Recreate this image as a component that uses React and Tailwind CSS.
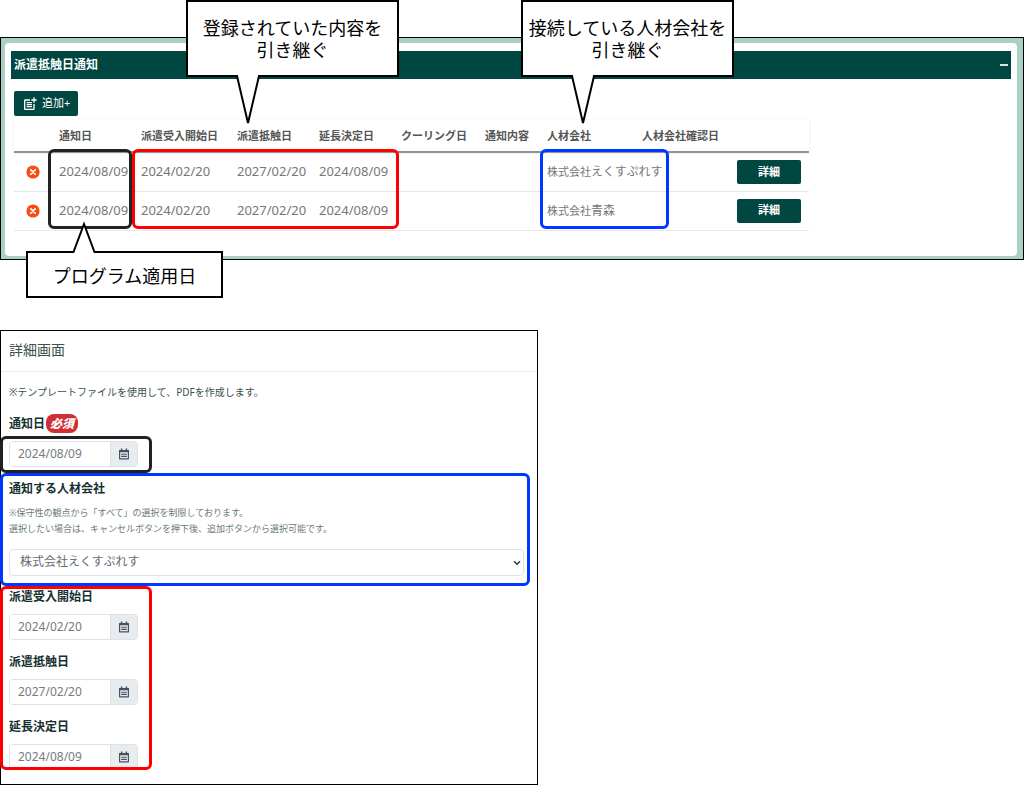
import { MdPostAdd } from "react-icons/md";

const columns = [
  { label: "", width: "w-[41px]" },
  { label: "通知日", width: "w-[82px]" },
  { label: "派遣受入開始日", width: "w-[96px]" },
  { label: "派遣抵触日", width: "w-[82px]" },
  { label: "延長決定日", width: "w-[82px]" },
  { label: "クーリング日", width: "w-[84px]" },
  { label: "通知内容", width: "w-[62px]" },
  { label: "人材会社", width: "w-[95px]" },
  { label: "人材会社確認日", width: "w-[99px]" },
  { label: "", width: "w-[72px]" },
];

const rows = [
  { id: 1, notice: "2024/08/09", start: "2024/02/20", limit: "2027/02/20", extension: "2024/08/09", company: "えくすぷれす" },
  { id: 2, notice: "2024/08/09", start: "2024/02/20", limit: "2027/02/20", extension: "2024/08/09", company: "青森" },
];

function DeleteIcon() {
  return (
    <svg viewBox="0 0 14 14" className="size-3.5" aria-hidden="true">
      <circle cx="7" cy="7" r="6.6" fill="#fb4a12" />
      <path d="M4.8 4.800l4.400 4.400M9.200 4.800L4.800 9.200" stroke="#fff" strokeWidth="1.8" strokeLinecap="round" />
    </svg>
  );
}

function CalendarIcon() {
  return (
    <svg viewBox="0 0 12 12" className="size-3" aria-hidden="true" fill="none" stroke="#475260">
      <path d="M1.6 2.5h8.8v8.3H1.6z" strokeWidth="1.2" strokeLinejoin="round" />
      <path d="M1.2 3.2h9.6" strokeWidth="2" />
      <path d="M3.6 .6v2M8.4 .6v2" strokeWidth="1.5" />
      <path d="M3.2 6.3h5.6M3.2 8.4h5.6" strokeWidth="1.1" />
    </svg>
  );
}

function Callout({ place, pointer, up, children }) {
  return (
    <div className={`absolute flex items-center justify-center border-2 border-black bg-white text-center text-lg leading-[22px] whitespace-nowrap text-black ${place}`}>
      <p>{children}</p>
      {up ? (
        <svg viewBox="0 0 26 32" className={`absolute h-8 w-[26px] ${pointer}`} aria-hidden="true">
          <path d="M2 32L13 3L24 32" fill="#fff" />
          <path d="M1 31h1.5L13 3L23.500 31H25" fill="none" stroke="#000" strokeWidth="2" />
        </svg>
      ) : (
        <svg viewBox="0 0 26 54" className={`absolute h-[54px] w-[26px] ${pointer}`} aria-hidden="true">
          <path d="M2 0L13 48L24 0" fill="#fff" />
          <path d="M1 1h1L13 48L24 1h1" fill="none" stroke="#000" strokeWidth="2" />
        </svg>
      )}
    </div>
  );
}

function Outline({ place }) {
  return <div className={`pointer-events-none absolute rounded-md border-3 ${place}`} />;
}

function DateField({ id, label, value, required }) {
  return (
    <div>
      <div className="flex h-5 items-center gap-px">
        <label htmlFor={id} className="text-xs font-bold text-[#16302f]">{label}</label>
        {required && (
          <span className="rounded-lg bg-[#d22f33] px-1 text-xs leading-[19px] font-black text-white italic">必須</span>
        )}
      </div>
      <div className="mt-[7px] flex h-[26px] w-[129px] overflow-hidden rounded-sm border border-[#dee2e6]">
        <input id={id} type="text" defaultValue={value} className="w-[100px] min-w-0 bg-white pl-2 text-xs text-[#757b80] outline-none" />
        <button type="button" aria-label={`${label}を選択`} className="flex flex-1 items-center justify-center border-l border-[#dee2e6] bg-[#e9ecef]">
          <CalendarIcon />
        </button>
      </div>
    </div>
  );
}

function NoticePanel() {
  return (
    <section className="relative mt-[37px] border border-black bg-[#a9d0c5] pt-[5px] pr-1.5 pb-[3px] pl-1">
      <div className="rounded-sm bg-white px-1.5 pt-2 pb-[25px]">
        <header className="flex h-7 items-center justify-between bg-[#004742] px-[3px] text-white">
          <h2 className="text-xs font-bold">派遣抵触日通知</h2>
          <button type="button" aria-label="閉じる" className="flex h-4 items-center">
            <span className="h-0.5 w-2 bg-[#d5e4e1]" />
          </button>
        </header>
        <div className="px-[3px] pt-3">
          <button type="button" className="flex h-[25px] w-16 items-center gap-1 rounded-xs bg-[#004742] pl-2 text-[11px] whitespace-nowrap text-white">
            <MdPostAdd className="size-4 shrink-0" />
            追加+
          </button>
          <table className="mt-1 w-[795px] table-fixed border-collapse text-left">
            <thead>
              <tr className="h-8 border-b-2 border-[#8f949b] text-[11px] text-[#555] shadow-sm">
                {columns.map((column, index) => (
                  <th key={index} scope="col" className={`pt-0.5 pl-1 font-bold whitespace-nowrap ${column.width}`}>{column.label}</th>
                ))}
              </tr>
            </thead>
            <tbody>
              {rows.map((row) => (
                <tr key={row.id} className="h-[39px] border-b border-[#e8e8e8] text-[13px] text-[#777]">
                  <td className="pl-3">
                    <button type="button" aria-label="削除" className="flex"><DeleteIcon /></button>
                  </td>
                  <td className="pl-1">{row.notice}</td>
                  <td className="pl-1">{row.start}</td>
                  <td className="pl-1">{row.limit}</td>
                  <td className="pl-1">{row.extension}</td>
                  <td />
                  <td />
                  <td className="pl-1 text-xs whitespace-nowrap"><span className="text-[11px]">株式会社</span>{row.company}</td>
                  <td />
                  <td>
                    <button type="button" className="block h-6 w-16 rounded-xs bg-[#004742] text-[11px] font-bold text-white">詳細</button>
                  </td>
                </tr>
              ))}
            </tbody>
          </table>
        </div>
      </div>

      <Outline place="top-[111px] left-[47px] h-20 w-[84px] border-[#222]" />
      <Outline place="top-[111px] left-[131px] h-20 w-[267px] border-[#ff0000]" />
      <Outline place="top-[111px] left-[539px] h-20 w-[129px] border-[#0038ff]" />
      <Callout place="-top-[38px] left-[185px] h-[77px] w-[213px]" pointer="top-[73px] left-[47px]">
        登録されていた内容を<br />引き継ぐ
      </Callout>
      <Callout place="-top-[38px] left-[520px] h-[77px] w-[213px]" pointer="top-[73px] left-[47px]">
        接続している人材会社を<br />引き継ぐ
      </Callout>
      <Callout up place="top-[213px] left-[25px] h-[47px] w-[197px] pt-0.5" pointer="-top-8 left-[43px]">
        プログラム適用日
      </Callout>
    </section>
  );
}

function DetailPanel() {
  return (
    <section className="relative mt-[70px] w-full max-w-[538px] border border-black bg-white pb-3.5">
      <h2 className="border-b border-[#eee] px-2 pt-[9px] pb-[11px] text-sm leading-5 text-[#3b4f4d]">詳細画面</h2>
      <form className="px-2 pt-3">
        <p className="text-[10px] leading-4 text-[#3b4f4d]">※テンプレートファイルを使用して、PDFを作成します。</p>
        <div className="mt-3.5">
          <DateField id="notice-date" label="通知日" value="2024/08/09" required />
        </div>
        <div className="mt-3 pr-[5px]">
          <label htmlFor="company" className="block text-xs leading-5 font-bold text-[#16302f]">通知する人材会社</label>
          <p className="mt-1.5 text-[9px] leading-4 text-[#6b7b79]">
            ※保守性の観点から「すべて」の選択を制限しております。<br />
            選択したい場合は、キャンセルボタンを押下後、追加ボタンから選択可能です。
          </p>
          <div className="relative mt-3">
            <select id="company" defaultValue="express" className="block h-[27px] w-full appearance-none rounded-sm border border-[#dee2e6] bg-white pl-2.5 text-xs text-[#666c70] outline-none">
              <option value="express">株式会社えくすぷれす</option>
              <option value="aomori">株式会社青森</option>
            </select>
            <svg viewBox="0 0 8 6" className="pointer-events-none absolute top-[11px] right-[3px] h-1.5 w-2" aria-hidden="true">
              <path d="M1 1.200L4 4.200L7 1.200" fill="none" stroke="#343a40" strokeWidth="1.6" />
            </svg>
          </div>
        </div>
        <div className="mt-[11px] flex flex-col gap-3">
          <DateField id="start-date" label="派遣受入開始日" value="2024/02/20" />
          <DateField id="limit-date" label="派遣抵触日" value="2027/02/20" />
          <DateField id="extension-date" label="延長決定日" value="2024/08/09" />
        </div>
      </form>

      <Outline place="top-[105px] -left-px h-[37px] w-[152px] border-[#222]" />
      <Outline place="top-[142px] -left-px h-[113px] w-[530px] border-[#0038ff]" />
      <Outline place="top-[255px] -left-px h-[184px] w-[152px] border-[#ff0000]" />
    </section>
  );
}

export default function App() {
  return (
    <main className="flow-root bg-white font-['Noto_Sans','Noto_Sans_CJK_JP',sans-serif]" lang="ja">
      <NoticePanel />
      <DetailPanel />
    </main>
  );
}
